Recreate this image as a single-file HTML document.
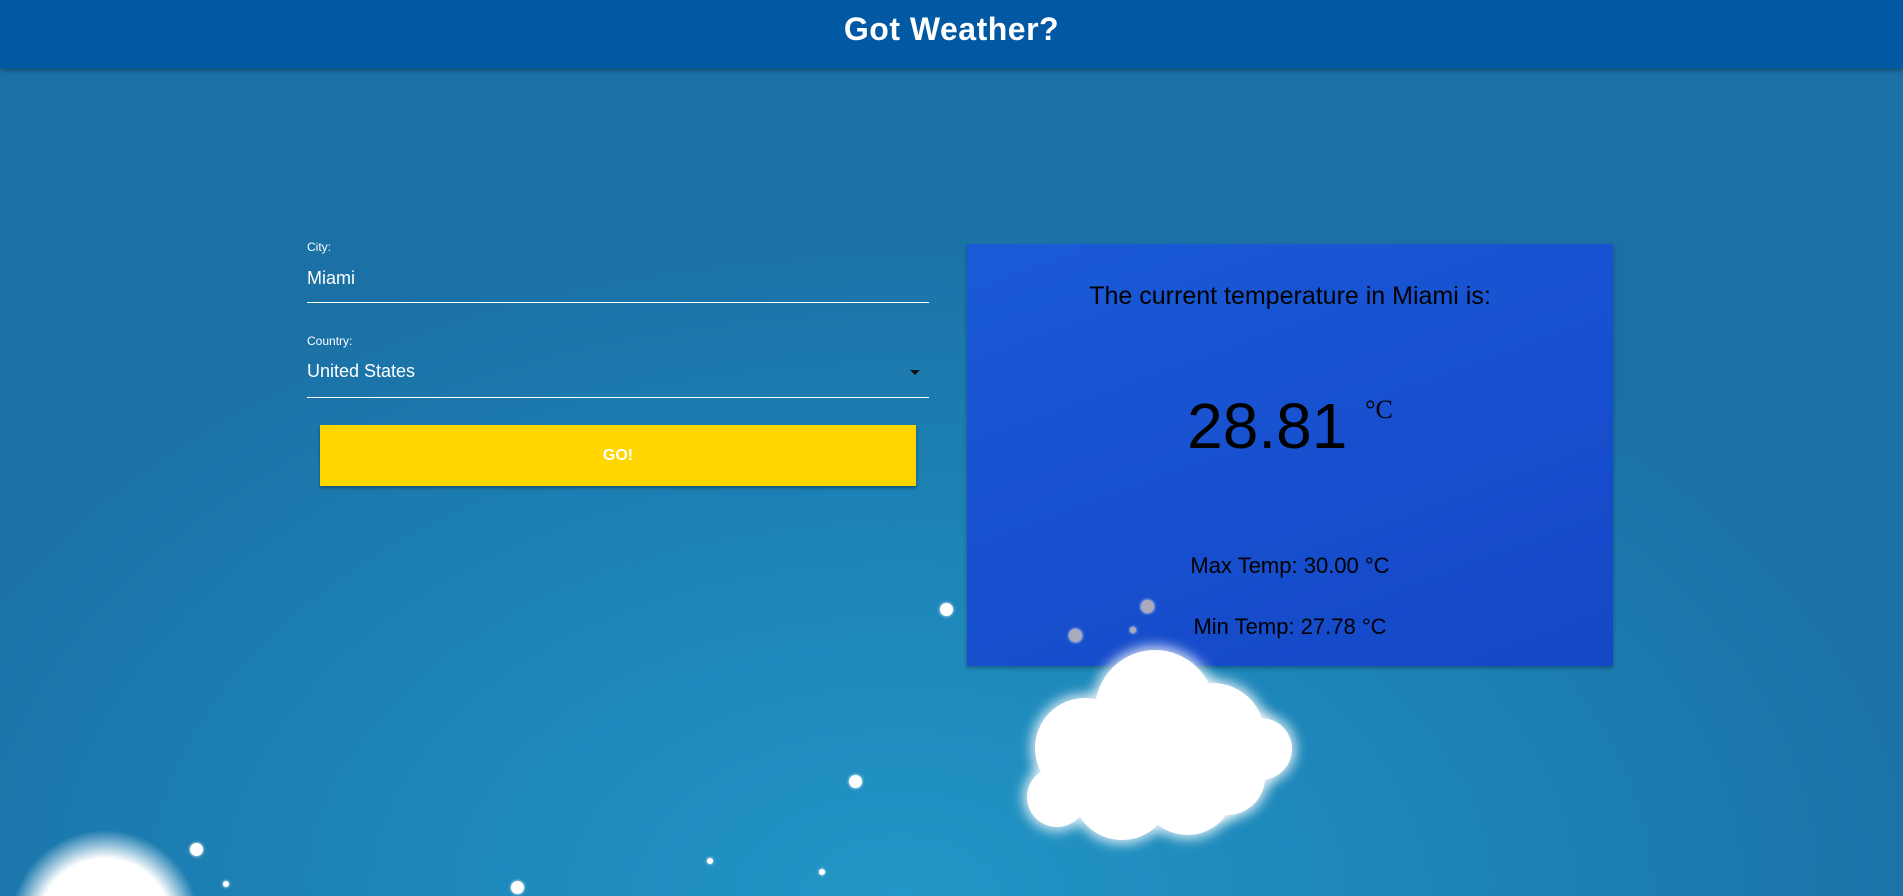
<!DOCTYPE html>
<html><head><meta charset="utf-8"><style>
*{margin:0;padding:0;box-sizing:border-box}
html,body{width:1903px;height:896px;overflow:hidden}
#w{width:1903px;height:896px;overflow:hidden;position:relative;font-family:"Liberation Sans",sans-serif;
background:radial-gradient(ellipse 1100px 700px at 900px 900px,#2296c6 0%,#1d86b9 45%,#1b70a5 100%);}
.hdr{position:absolute;left:0;top:0;width:1903px;height:68px;background:#0059a2;box-shadow:0 2px 5px rgba(0,0,0,.35);color:#fff;text-align:center;font-size:32px;line-height:58px;letter-spacing:.5px;font-weight:bold}
.lbl{position:absolute;left:307px;color:#fff;font-size:12px}
.val{position:absolute;left:307px;color:#fff;font-size:18px}
.line{position:absolute;left:307px;width:622px;height:1px;background:#fff}
.btn{position:absolute;left:320px;top:425px;width:596px;height:61px;background:#ffd600;box-shadow:0 2px 3px rgba(0,0,0,.35);color:#fff;font-size:16px;text-align:center;line-height:61px;font-weight:bold}
.card{position:absolute;left:967px;top:244px;width:646px;height:422px;background:linear-gradient(160deg,#1a5ad8,#1447c6);box-shadow:0 2px 4px rgba(0,0,0,.3);color:#000;text-align:center}
.dot{position:absolute;border-radius:50%;background:#fff;box-shadow:0 0 3px #fff}
.cl{position:absolute;border-radius:50%;background:#fff;box-shadow:0 0 12px 4px rgba(255,255,255,.8)}
</style></head><body><div id="w">
<div class="hdr">Got Weather?</div>
<div class="lbl" style="top:240px">City:</div>
<div class="val" style="top:268px">Miami</div>
<div class="line" style="top:302px"></div>
<div class="lbl" style="top:334px">Country:</div>
<div class="val" style="top:361px">United States</div>
<div style="position:absolute;left:910px;top:370px;width:0;height:0;border-left:5px solid transparent;border-right:5px solid transparent;border-top:5px solid #111"></div>
<div class="line" style="top:397px"></div>
<div class="btn">GO!</div>
<div class="card">
<div style="margin-top:38px;font-size:25px">The current temperature in Miami is:</div>
<div style="margin-top:64px;font-size:64px;line-height:70px">28.81 <sup style="font-size:26px;font-family:'Liberation Serif',serif;vertical-align:30px">°C</sup></div>
<div style="margin-top:92px;font-size:22px">Max Temp: 30.00 °C</div>
<div style="margin-top:35px;font-size:22px">Min Temp: 27.78 °C</div>
</div>
<div class="cl" style="left:1095px;top:650px;width:120px;height:120px"></div>
<div class="cl" style="left:1035px;top:698px;width:100px;height:100px"></div>
<div class="cl" style="left:1160px;top:683px;width:105px;height:105px"></div>
<div class="cl" style="left:1230px;top:718px;width:62px;height:62px"></div>
<div class="cl" style="left:1027px;top:767px;width:60px;height:60px"></div>
<div class="cl" style="left:1072px;top:740px;width:100px;height:100px"></div>
<div class="cl" style="left:1140px;top:740px;width:95px;height:95px"></div>
<div class="cl" style="left:1190px;top:740px;width:75px;height:75px"></div>
<div style="position:absolute;left:0;top:830px;width:230px;height:66px;background:radial-gradient(circle 95px at 105px 95px,#fff 0,#fff 70%,rgba(255,255,255,0) 100%)"></div>
<div class="dot" style="left:940px;top:603px;width:13px;height:13px"></div>
<div class="dot" style="left:1141px;top:600px;width:13px;height:13px;background:#aab"></div>
<div class="dot" style="left:1069px;top:629px;width:13px;height:13px;background:#aab"></div>
<div class="dot" style="left:1130px;top:627px;width:6px;height:6px;background:#aab"></div>
<div class="dot" style="left:849px;top:775px;width:13px;height:13px"></div>
<div class="dot" style="left:190px;top:843px;width:13px;height:13px"></div>
<div class="dot" style="left:223px;top:881px;width:6px;height:6px"></div>
<div class="dot" style="left:511px;top:881px;width:13px;height:13px"></div>
<div class="dot" style="left:707px;top:858px;width:6px;height:6px"></div>
<div class="dot" style="left:819px;top:869px;width:6px;height:6px"></div>
</div></body></html>
